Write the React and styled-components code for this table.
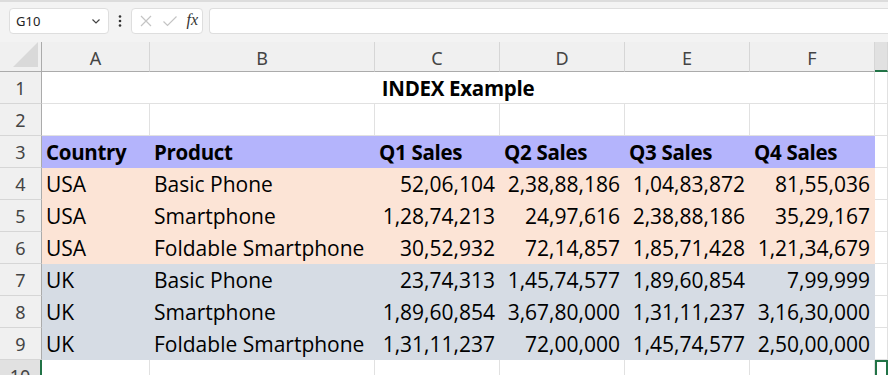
import React from 'react'
import styled, { createGlobalStyle } from 'styled-components'

const GlobalStyle = createGlobalStyle`
  html, body { margin: 0; padding: 0; background: #fff; }
  body { width: 888px; height: 375px; overflow: hidden; font-family: "Open Sans", sans-serif; }
`

const COLS = '42px 108px 225px 125px 125px 125px 125px 1fr'

const Sheet = styled.div`
  width: 888px;
  height: 375px;
  overflow: hidden;
  display: flex;
  flex-direction: column;
  background: #fff;
`

const FormulaBar = styled.div`
  flex: none;
  height: 42px;
  box-sizing: border-box;
  background: #f3f3f3;
  border-top: 2px solid #dcdcdc;
  display: flex;
  align-items: center;
  padding: 0 0 3px 9px;
`

const NameBox = styled.div`
  width: 100px;
  height: 26px;
  box-sizing: border-box;
  background: #fff;
  border: 1px solid #dedede;
  border-radius: 4px;
  display: flex;
  align-items: center;
  justify-content: space-between;
  padding: 0 6px 0 6px;
  font-family: "Noto Sans", sans-serif;
  font-size: 13px;
  color: #222;
`

const Dots = styled.div`
  width: 22px;
  display: flex;
  justify-content: center;
  color: #333;
`

const IconBox = styled.div`
  width: 72px;
  height: 26px;
  box-sizing: border-box;
  background: #fff;
  border: 1px solid #dedede;
  border-radius: 4px;
  display: flex;
  align-items: center;
  justify-content: space-between;
  padding: 0 4px 0 7px;
`

const Fx = styled.span`
  font-family: "Liberation Serif", serif;
  font-style: italic;
  font-size: 16px;
  color: #333;
  margin-top: -2px;
`

const FormulaInput = styled.div`
  flex: 1;
  height: 26px;
  margin-left: 6px;
  box-sizing: border-box;
  background: #fff;
  border: 1px solid #dedede;
  border-right: none;
  border-radius: 4px 0 0 4px;
`

const Row = styled.div`
  display: grid;
  grid-template-columns: ${COLS};
  height: ${p => p.$h || 32}px;
  flex: none;
`

const ColHead = styled.div`
  box-sizing: border-box;
  background: ${p => (p.$active ? '#e1e1e1' : '#f0f0f0')};
  border-right: 1px solid #d6d6d6;
  border-bottom: ${p => (p.$active ? '2px solid #217346' : '1px solid #ababab')};
  display: flex;
  align-items: center;
  justify-content: center;
  font-family: "Noto Sans", sans-serif;
  font-size: 18px;
  color: #444;
  padding-top: 2px;
`

const Corner = styled.div`
  box-sizing: border-box;
  background: #f0f0f0;
  border-right: 1px solid #ababab;
  border-bottom: 1px solid #ababab;
  position: relative;
  &::after {
    content: '';
    position: absolute;
    right: 3px;
    bottom: 4px;
    width: 0;
    height: 0;
    border-left: 25px solid transparent;
    border-bottom: 25px solid #d9d9d9;
  }
`

const RowHead = styled.div`
  box-sizing: border-box;
  background: ${p => (p.$active ? '#e1e1e1' : '#f0f0f0')};
  border-right: ${p => (p.$active ? '2px solid #217346' : '1px solid #ababab')};
  border-bottom: 1px solid #d6d6d6;
  display: flex;
  align-items: center;
  justify-content: center;
  font-family: "Noto Sans", sans-serif;
  font-size: 18px;
  color: #444;
`

const Cell = styled.div`
  box-sizing: border-box;
  grid-column: ${p => (p.$span ? `span ${p.$span}` : 'auto')};
  background: ${p => p.$fill || '#fff'};
  border-right: 1px solid ${p => p.$fill || '#e1e1e1'};
  border-bottom: 1px solid ${p => p.$fill || '#e1e1e1'};
  display: flex;
  align-items: center;
  justify-content: ${p => (p.$align === 'right' ? 'flex-end' : p.$align === 'center' ? 'center' : 'flex-start')};
  padding: 0 4px 0 4px;
  font-family: "Open Sans", sans-serif;
  font-size: ${p => (p.$bold ? '20.5px' : '21px')};
  font-weight: ${p => (p.$bold ? 700 : 400)};
  color: #000;
  white-space: nowrap;
  letter-spacing: ${p => (p.$bold ? '-0.3px' : '0')};
`

const Selected = styled(Cell)`
  border: 2px solid #217346;
`

const HEAD_FILL = '#b4b4fc'
const USA_FILL = '#fce4d6'
const UK_FILL = '#d6dce4'

const data = [
  ['USA', 'Basic Phone', '52,06,104', '2,38,88,186', '1,04,83,872', '81,55,036'],
  ['USA', 'Smartphone', '1,28,74,213', '24,97,616', '2,38,88,186', '35,29,167'],
  ['USA', 'Foldable Smartphone', '30,52,932', '72,14,857', '1,85,71,428', '1,21,34,679'],
  ['UK', 'Basic Phone', '23,74,313', '1,45,74,577', '1,89,60,854', '7,99,999'],
  ['UK', 'Smartphone', '1,89,60,854', '3,67,80,000', '1,31,11,237', '3,16,30,000'],
  ['UK', 'Foldable Smartphone', '1,31,11,237', '72,00,000', '1,45,74,577', '2,50,00,000'],
]

const ChevronDown = () => (
  <svg width="12" height="12" viewBox="0 0 12 12">
    <path d="M2.5 4.5 L6 8 L9.5 4.5" fill="none" stroke="#444" strokeWidth="1.2" />
  </svg>
)

const VDots = () => (
  <svg width="4" height="14" viewBox="0 0 4 14">
    <circle cx="2" cy="2.5" r="1.3" fill="#333" />
    <circle cx="2" cy="7" r="1.3" fill="#333" />
    <circle cx="2" cy="11.5" r="1.3" fill="#333" />
  </svg>
)

const Cross = () => (
  <svg width="14" height="14" viewBox="0 0 14 14">
    <path d="M2 2 L12 12 M12 2 L2 12" stroke="#c4c4c4" strokeWidth="1.2" fill="none" />
  </svg>
)

const Check = () => (
  <svg width="16" height="14" viewBox="0 0 16 14">
    <path d="M1.5 7.5 L5.5 11.5 L14.5 2.5" stroke="#c4c4c4" strokeWidth="1.2" fill="none" />
  </svg>
)

export default function App () {
  const letters = ['A', 'B', 'C', 'D', 'E', 'F']
  return (
    <Sheet>
      <GlobalStyle />
      <FormulaBar>
        <NameBox>
          <span>G10</span>
          <ChevronDown />
        </NameBox>
        <Dots><VDots /></Dots>
        <IconBox>
          <Cross />
          <Check />
          <Fx>fx</Fx>
        </IconBox>
        <FormulaInput />
      </FormulaBar>

      <Row $h={30}>
        <Corner />
        {letters.map(l => <ColHead key={l}>{l}</ColHead>)}
        <ColHead $active />
      </Row>

      <Row>
        <RowHead>1</RowHead>
        <Cell $span={6} $align="center" $bold>INDEX Example</Cell>
        <Cell />
      </Row>

      <Row>
        <RowHead>2</RowHead>
        {[0, 1, 2, 3, 4, 5, 6].map(i => <Cell key={i} />)}
      </Row>

      <Row>
        <RowHead>3</RowHead>
        {['Country', 'Product', 'Q1 Sales', 'Q2 Sales', 'Q3 Sales', 'Q4 Sales'].map(h => (
          <Cell key={h} $fill={HEAD_FILL} $bold>{h}</Cell>
        ))}
        <Cell />
      </Row>

      {data.map((r, i) => {
        const fill = i < 3 ? USA_FILL : UK_FILL
        return (
          <Row key={i}>
            <RowHead>{i + 4}</RowHead>
            {r.map((v, j) => (
              <Cell key={j} $fill={fill} $align={j > 1 ? 'right' : 'left'}>{v}</Cell>
            ))}
            <Cell />
          </Row>
        )
      })}

      <Row>
        <RowHead $active>10</RowHead>
        {[0, 1, 2, 3, 4, 5].map(i => <Cell key={i} />)}
        <Selected />
      </Row>
    </Sheet>
  )
}
